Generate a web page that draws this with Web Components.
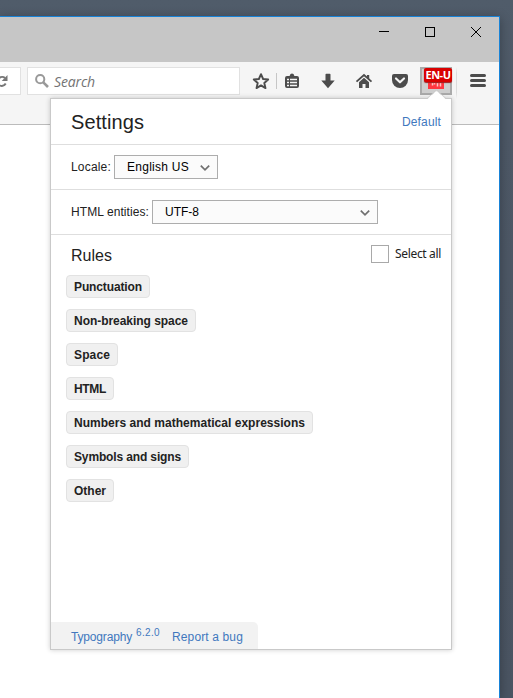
<!DOCTYPE html>
<html lang="en">
<head>
<meta charset="utf-8">
<title>Typography settings</title>
<style>
html,body{margin:0;width:513px;height:698px;overflow:hidden;font-family:"Liberation Sans",Arial,sans-serif}
</style>
</head>
<body>
<app-desktop></app-desktop>
<script>
const define = (name, html) => {
  const t = document.createElement('template');
  t.innerHTML = html;
  customElements.define(name, class extends HTMLElement {
    constructor() {
      super();
      this.attachShadow({ mode: 'open' }).append(t.content.cloneNode(true));
    }
  });
};

// Text run whose letter spacing is adjusted to fill the width given in "w".
customElements.define('fit-text', class extends HTMLElement {
  connectedCallback() {
    if (this.shadowRoot) return;
    const root = this.attachShadow({ mode: 'open' });
    root.innerHTML = `<style>:host{display:inline-block;white-space:nowrap;width:${this.getAttribute('w')}px}span{display:inline-block;white-space:nowrap}</style><span><slot></slot></span>`;
    const span = root.querySelector('span');
    const n = this.textContent.length;
    const w = span.getBoundingClientRect().width;
    span.style.letterSpacing = ((+this.getAttribute('w') - w) / n) + 'px';
  }
});

define('select-box', `
<style>
:host{display:flex;align-items:center;justify-content:space-between;box-sizing:border-box;height:24px;border:1px solid #adadad;background:#fbfbfb;color:#000;font-size:12px;line-height:22px;padding:0 7px 0 12px}
svg{display:block;margin-top:2px}
</style>
<slot></slot>
<svg width="10" height="8" viewBox="0 0 10 8"><path d="M.8 1.7 5 5.9 9.2 1.7" fill="none" stroke="#707070" stroke-width="1.7"/></svg>`);

define('rule-chip', `
<style>
:host{display:block;box-sizing:border-box;height:23px;border:1px solid #e2e2e2;border-radius:4px;background:#f0f0f0;color:#222;font-weight:bold;font-size:12px;line-height:21px;padding:1px 7px 0}
</style><slot></slot>`);

define('title-bar', `
<style>
:host{display:flex;justify-content:flex-end;box-sizing:border-box;height:45px;background:#c6c6c6;padding:9px 17px 0 0;gap:34px}
svg{display:block;flex:none}
path,rect{fill:none;stroke:#000;shape-rendering:crispEdges}
.x{shape-rendering:auto}
</style>
<svg width="12" height="12"><path d="M1 5.5h10"/></svg>
<svg width="12" height="12"><rect x="1.5" y="1.5" width="9" height="9"/></svg>
<svg width="12" height="12"><path class="x" d="M1 1l10 10M11 1 1 11"/></svg>`);

define('nav-bar', `
<style>
:host{display:flex;box-sizing:border-box;height:63px;background:#f5f5f5;border-bottom:1px solid #bbb;padding-top:5px;align-items:flex-start}
svg{display:block;flex:none}
.reload{flex:none;box-sizing:border-box;width:21px;height:28px;border:1px solid #e1e1e1;border-left:0;background:#fff;margin-right:6px}
.search{flex:none;box-sizing:border-box;width:213px;height:28px;border:1px solid #e1e1e1;background:#fff;display:flex;align-items:center;padding-left:7px;color:#737373;font:italic 14px/26px "Open Sans","Noto Sans",sans-serif}
.search svg{margin-right:5px}
.search fit-text{margin-top:1px}
.tools{display:flex;flex:none}
.ext{flex:none;position:relative;box-sizing:border-box;width:32px;height:28px;border:2px solid #aaa;background:#cecece}
.tile{position:absolute;left:6px;top:4px}
.badge{position:absolute;left:2px;top:-1px;width:28px;height:14px;background:#d90000;border-radius:2px;color:#fff;font:bold 11px/13px "Open Sans","Noto Sans",sans-serif;text-align:center;box-shadow:0 1px 1px #9b2020}
.sep{flex:none;width:1px;height:32px;background:linear-gradient(#f5f5f5,#dcdcdc 20%,#dcdcdc 80%,#f5f5f5);margin:0 0 0 4px}
</style>
<div class="reload"><svg width="20" height="26"><path d="M-1 10.300A4.400 4.400 0 0 1 5 9.900M-1 16.900A4.400 4.400 0 0 0 5.700 15.500" fill="none" stroke="#777" stroke-width="2"/><path d="M7.500 7v6H1.700z" fill="#777"/></svg></div>
<div class="search"><svg width="14" height="14" viewBox="0 0 14 14"><circle cx="5.200" cy="5.200" r="4.100" fill="none" stroke="#999" stroke-width="2"/><path d="M8.300 8.300 13 13" stroke="#999" stroke-width="2.600"/></svg><fit-text w="41">Search</fit-text></div>
<div class="tools">
<svg width="180" height="28" viewBox="240 67 180 28">
<path d="M261 74.200l2.100 4.800 5.100.5-3.900 3.500 1.200 5.100-4.500-2.700-4.500 2.700 1.200-5.100-3.900-3.500 5.100-.5z" fill="none" stroke="#4c4c4c" stroke-width="1.900" stroke-linejoin="round"/>
<path d="M276.500 73v16" stroke="#c6c6c6"/>
<path d="M287 76h2.200q.8 0 .8-1 .1-1.600 2-1.600t2 1.600q0 1 .8 1h2.200a2 2 0 0 1 2 2v8a2 2 0 0 1-2 2h-10a2 2 0 0 1-2-2v-8a2 2 0 0 1 2-2z" fill="#4c4c4c"/>
<path d="M287 79.500h2M290 79.500h7M287 82.500h2M290 82.500h7M287 85.500h2M290 85.500h7" stroke="#f5f5f5" stroke-width="1.300"/>
<path d="M325.500 74.500q0-.8.8-.8h3.400q.8 0 .8.800V80.500h4.200l-6.700 7.800-6.700-7.800h4.200z" fill="#4c4c4c"/>
<path d="M356.500 81.600l7.500-6.600 7.500 6.600" fill="none" stroke="#4c4c4c" stroke-width="1.800"/><path d="M367 75h2.200v4H367z" fill="#4c4c4c"/><path d="M359 82.200l5-4.500 5 4.500V88h-3.500v-4h-3v4H359z" fill="#4c4c4c"/>
<path d="M394 74h12a2 2 0 0 1 2 2v4a8 8 0 0 1-16 0v-4a2 2 0 0 1 2-2z" fill="#4c4c4c"/><path d="M396 78.500l4 3.800 4-3.800" fill="none" stroke="#f5f5f5" stroke-width="2.200" stroke-linecap="round" stroke-linejoin="round"/>
</svg>
<div class="ext"><svg class="tile" width="16" height="16"><path d="M0 0h16v16H0z" fill="#ff3640"/><path d="M4.500 10v2.500M6.500 10v1.500M9.500 10v3.500M12.500 10v3.500" stroke="#ffc4c6" stroke-width="1.500"/></svg><div class="badge"><fit-text w="25">EN-U</fit-text></div></div>
<div class="sep"></div>
<svg width="42" height="28" viewBox="457 67 42 28"><path d="M471.500 75.500h13M471.500 80.500h13M471.500 85.500h13" stroke="#4c4c4c" stroke-width="3" stroke-linecap="round"/></svg>
</div>`);

define('settings-panel', `
<style>
:host{display:flex;flex-direction:column;box-sizing:border-box;width:402px;height:552px;border:1px solid #c9c9c9;background:#fff;box-shadow:0 0 5px rgba(0,0,0,.2);color:#222;font-size:12px}
.arrow{position:absolute;right:3px;top:-9px}
header,.row{display:flex;box-sizing:border-box;border-bottom:1px solid #dedede;padding-left:20px;flex:none}
header{height:46px;align-items:center;justify-content:space-between;padding-right:10px}
h1,h2{margin:0;font-weight:normal}
h1{font-size:20px;line-height:24px;margin-top:1px}
h2{font-size:16px;line-height:20px;margin-top:1px}
.row{height:45px;align-items:center}
.row>select-box{margin-left:3px}
.head{display:flex;justify-content:space-between;padding:10px 10px 0 20px;height:30px}
.all{display:flex;gap:6px;font:12px/18px "Noto Sans","Open Sans",sans-serif;height:18px}
.box{box-sizing:border-box;width:18px;height:18px;border:1px solid #a9a9a9}
.chips{display:flex;flex-direction:column;align-items:flex-start;gap:11px;padding-left:15px;flex:1}
footer{box-sizing:border-box;width:207px;height:27px;background:#f2f2f2;border-top-right-radius:5px;padding-left:20px;display:flex;line-height:30px}
a{color:#4178be}
sup{font-size:10px;line-height:22px;margin:0 12px 0 4px;color:#4178be}
</style>
<svg class="arrow" width="22" height="10"><path d="M1 9.500 10.500.5 20 9.500V10H1z" fill="#fff"/><path d="M1 8.500 9.500.8h2L20 8.500" fill="none" stroke="#c9c9c9" stroke-width=".8"/></svg>
<header><h1><fit-text w="73">Settings</fit-text></h1><a><fit-text w="39">Default</fit-text></a></header>
<div class="row"><fit-text w="40">Locale:</fit-text><select-box style="width:104px"><fit-text w="62">English US</fit-text></select-box></div>
<div class="row"><fit-text w="78">HTML entities:</fit-text><select-box style="width:226px"><fit-text w="34">UTF-8</fit-text></select-box></div>
<div class="head"><h2><fit-text w="41">Rules</fit-text></h2><div class="all"><div class="box"></div><fit-text w="46">Select all</fit-text></div></div>
<div class="chips">
<rule-chip><fit-text w="68">Punctuation</fit-text></rule-chip>
<rule-chip><fit-text w="114">Non-breaking space</fit-text></rule-chip>
<rule-chip><fit-text w="36">Space</fit-text></rule-chip>
<rule-chip><fit-text w="32">HTML</fit-text></rule-chip>
<rule-chip><fit-text w="231">Numbers and mathematical expressions</fit-text></rule-chip>
<rule-chip><fit-text w="107">Symbols and signs</fit-text></rule-chip>
<rule-chip><fit-text w="32">Other</fit-text></rule-chip>
</div>
<footer><a><fit-text w="61">Typography</fit-text></a><sup><fit-text w="24">6.2.0</fit-text></sup><a><fit-text w="71">Report a bug</fit-text></a></footer>`);

define('app-desktop', `
<style>
:host{display:block;box-sizing:border-box;width:513px;height:698px;padding-top:16px;background:linear-gradient(#505c6a,#4d5866 120px,#4a5462);overflow:hidden;position:relative}
.window{box-sizing:border-box;width:500px;height:682px;border:solid #1883d7;border-width:1px 1px 0 0;background:#fff;box-shadow:0 2px 10px rgba(0,0,0,.3)}
settings-panel{position:absolute;left:50px;top:98px}
</style>
<div class="window"><title-bar></title-bar><nav-bar></nav-bar></div>
<settings-panel></settings-panel>`);
</script>
</body>
</html>
